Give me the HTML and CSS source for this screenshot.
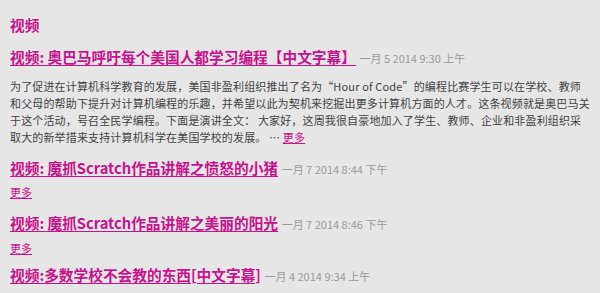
FILE: index.html
```html
<!DOCTYPE html>
<html lang="zh-CN">
<head>
<meta charset="utf-8">
<title>视频</title>
<link rel="stylesheet" href="styles.css">
</head>
<body>
<div class="panel">
  <h2 class="panel-title">视频</h2>
  <div class="item">
    <div class="item-head"><a class="item-title" href="#">视频: 奥巴马呼吁每个美国人都学习编程【中文字幕】</a> <span class="date">一月 5 2014 9:30 上午</span></div>
    <p class="excerpt">为了促进在计算机科学教育的发展，美国非盈利组织推出了名为“Hour of Code”的编程比赛学生可以在学校、教师和父母的帮助下提升对计算机编程的乐趣，并希望以此为契机来挖掘出更多计算机方面的人才。这条视频就是奥巴马关于这个活动，号召全民学编程。下面是演讲全文： 大家好，这周我很自豪地加入了学生、教师、企业和非盈利组织采取大的新举措来支持计算机科学在美国学校的发展。 … <a class="more" href="#">更多</a></p>
  </div>
  <div class="item">
    <div class="item-head"><a class="item-title" href="#">视频: 魔抓Scratch作品讲解之愤怒的小猪</a> <span class="date">一月 7 2014 8:44 下午</span></div>
    <div class="more-row"><a class="more" href="#">更多</a></div>
  </div>
  <div class="item">
    <div class="item-head"><a class="item-title" href="#">视频: 魔抓Scratch作品讲解之美丽的阳光</a> <span class="date">一月 7 2014 8:46 下午</span></div>
    <div class="more-row"><a class="more" href="#">更多</a></div>
  </div>
  <div class="item">
    <div class="item-head"><a class="item-title" href="#">视频:多数学校不会教的东西[中文字幕]</a> <span class="date">一月 4 2014 9:34 上午</span></div>
  </div>
</div>
</body>
</html>
```
FILE: styles.css
```css
html, body {
  margin: 0;
  padding: 0;
  background: #e6e6e6;
  height: 100%;
  overflow: hidden;
}
body {
  font-family: "Noto Sans CJK SC", "Noto Sans", sans-serif;
  color: #444;
}
.panel {
  padding: 15px 8px 0 10px;
}
.panel-title {
  margin: 0;
  font-size: 14.7px;
  line-height: 20px;
  font-weight: bold;
  color: #c8138c;
}
.item {
  margin-top: 11px;
}
.item:last-child {
  margin-top: 7.5px;
}
.item-head {
  height: 20px;
  line-height: 20px;
  white-space: nowrap;
}
.item-title {
  font-size: 14.7px;
  font-weight: bold;
  color: #c8138c;
  text-decoration: underline;
  text-underline-offset: 2px;
  line-height: 1;
}
.date {
  font-size: 11px;
  color: #9a9a9a;
  line-height: 1;
}
.excerpt {
  margin: 11.5px 0 0 0;
  font-size: 11px;
  line-height: 17px;
  letter-spacing: 0.15px;
  color: #444;
}
.more-row {
  margin-top: 7.5px;
  height: 17px;
  font-size: 11px;
  line-height: 17px;
}
.more {
  color: #c8138c;
  text-decoration: underline;
  font-size: 11px;
  line-height: 1;
}
```
